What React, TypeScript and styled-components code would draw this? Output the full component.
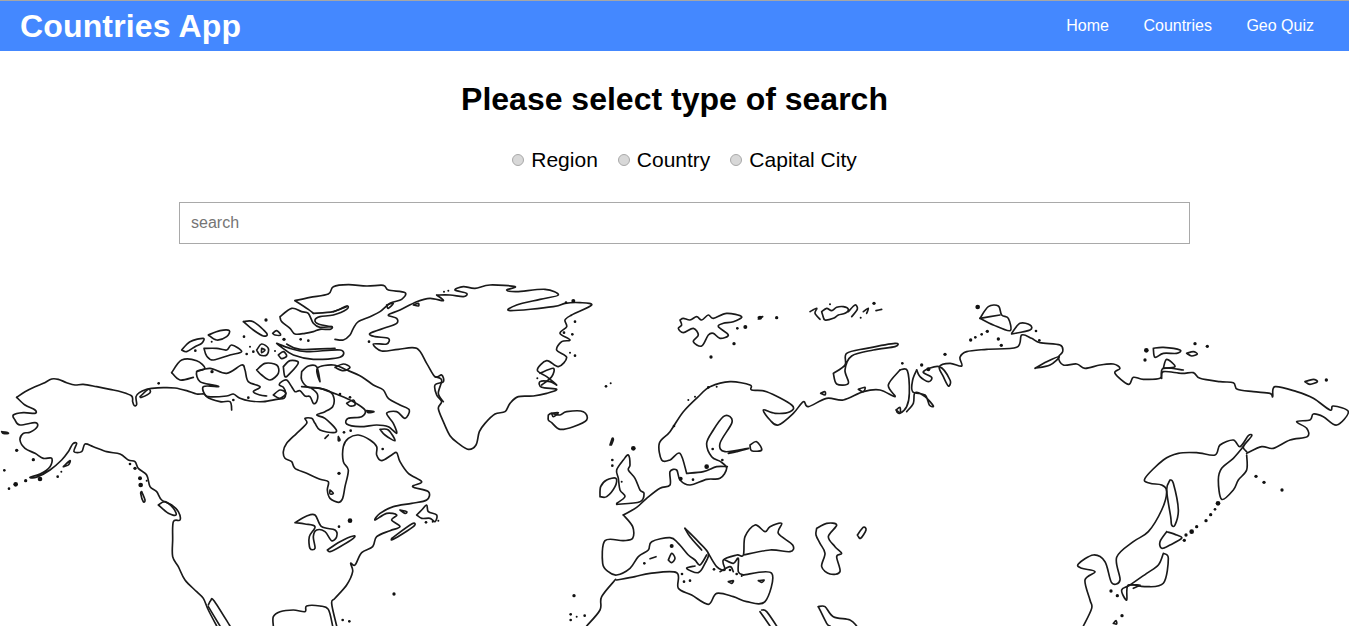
import React from "react";
import styled, { createGlobalStyle } from "styled-components";

const Global = createGlobalStyle`
  html, body { margin: 0; padding: 0; background: #fff; overflow: hidden; }
  body { font-family: "Liberation Sans", Arial, sans-serif; color: #000; }
`;
const Page = styled.div`
  height: 626px;
  overflow: hidden;
`;
const Nav = styled.nav`
  display: flex;
  align-items: center;
  justify-content: space-between;
  height: 50px;
  border-top: 1px solid #a6a6a6;
  background: #4488ff;
  padding: 0 35px 0 20px;
`;
const Brand = styled.div`
  color: #fff;
  font-size: 32px;
  letter-spacing: 0.15px;
  font-weight: 700;
`;
const Links = styled.div`
  display: flex;
  gap: 34.5px;
`;
const NavLink = styled.a`
  color: #fff;
  font-size: 16px;
`;
const Title = styled.h1`
  margin: 30px 0 0;
  text-align: center;
  font-size: 32px;
  line-height: 37px;
  font-weight: 700;
`;
const SearchForm = styled.form`
  display: flex;
  flex-direction: column;
  align-items: center;
  padding-left: 20px;
  margin-top: 30px;
`;
const Radios = styled.div`
  display: flex;
  gap: 20px;
  height: 23px;
  align-items: center;
`;
const RadioLabel = styled.label`
  display: flex;
  align-items: center;
  gap: 7px;
  font-size: 21px;
  line-height: 23px;
`;
const Radio = styled.input`
  appearance: none;
  width: 12px;
  height: 12px;
  margin: 0;
  border: 1px solid #a9a9a9;
  border-radius: 50%;
  background: #d8d8d8;
  box-sizing: border-box;
`;
const SearchInput = styled.input`
  box-sizing: border-box;
  width: 1011px;
  height: 42px;
  margin-top: 31px;
  padding: 0 11px;
  border: 1px solid #a9a9a9;
  border-radius: 0;
  outline: none;
  font: 16px "Liberation Sans", Arial, sans-serif;
  &::placeholder { color: #757575; }
`;
const WorldMap = styled.svg`
  display: block;
  width: 1349px;
  height: 356px;
  margin-top: 26px;
  filter: blur(0.35px);
`;
const Coast = styled.path`
  fill: none;
  stroke: #1a1a1a;
  stroke-width: 5;
  stroke-linejoin: round;
  stroke-linecap: round;
`;
const Isle = styled.circle`
  fill: #111;
`;

function smooth(s: string): string {
  const p = s.trim().split(/\s+/).map((t) => t.split(",").map(Number));
  let d = `M${p[0][0]} ${p[0][1]}`;
  for (let i = 0; i < p.length - 1; i++) {
    const a = p[Math.max(i - 1, 0)], b = p[i], c = p[i + 1], e = p[Math.min(i + 2, p.length - 1)];
    const k = 1 / 6;
    d += `C${(b[0] + (c[0] - a[0]) * k).toFixed(1)} ${(b[1] + (c[1] - a[1]) * k).toFixed(1)} ${(c[0] - (e[0] - b[0]) * k).toFixed(1)} ${(c[1] - (e[1] - b[1]) * k).toFixed(1)} ${c[0]} ${c[1]}`;
  }
  return d;
}

type Sheet = { ox: number; lines: string[]; dots: number[][] };

const west: Sheet = {
  ox: 0,
  lines: [
    "50,382 75,365 105,350 130,340 155,327 175,328 200,338 225,345 250,343 290,350 330,358 365,366 395,378 398,395 403,407 410,403 408,380 418,368 440,358 455,355 490,353 525,354 560,362 590,372 612,372 625,380 680,378 700,372 720,385 750,393 790,395 830,388 852,385 857,370 850,352 838,345 845,335 860,330 875,350 885,365 900,362 915,378 930,380 940,400 950,395 952,372 935,355",
    "905,350 960,355 990,365 1002,385 998,410 975,425 950,435 975,445 1008,478 1000,488 960,480 945,460 935,445 915,445 920,460 890,490 860,520 850,545 855,565 875,575 885,595 920,610 960,628 985,635 982,660 990,685 1015,697 1028,685 1035,650 1045,600 1030,575 1030,530 1045,505 1075,495 1110,510 1130,530 1130,555 1145,572 1175,555 1190,548 1200,575 1225,610 1265,635 1238,650 1285,665 1280,690 1235,700 1180,710 1140,730 1125,750 1160,730 1190,735 1175,750 1200,770 1170,782 1130,800 1118,830 1085,848 1065,885 1052,880 1058,905 1040,945 1005,985 995,1000 1010,1068",
    "50,382 75,405 105,420 105,430 70,428 40,435 45,450 60,465 105,458 112,470 90,487 70,490 60,510 75,535 105,550 130,565 155,565 150,590 120,612 90,622 110,622 150,600 185,570 205,545 218,522 230,520 222,545 245,545 255,522 280,530 320,545 360,552 385,570 405,575 415,595 440,615 450,650 470,665 485,690 515,705 535,725 540,750 520,755 518,810 518,860 535,890 555,930 590,965 610,985 625,1020 650,1068",
    "625,1005 632,992 642,992 690,1068",
    "625,1010 660,1068",
    "820,1068 820,1040 840,1025 880,1020 915,1025 920,1008 960,1008 985,1018 998,1068",
    "885,758 920,738 945,735 965,770 1005,780 1010,800 995,812 975,785 950,780 940,800 945,835 930,835 928,800 945,770 915,762 885,758",
    "982,840 1020,815 1060,798 1060,805 1020,830 990,845 982,840",
    "1200,720 1220,725 1215,730 1200,720",
    "1250,735 1265,720 1280,705 1285,725 1310,735 1305,755 1290,745 1265,745 1250,735",
    "1175,805 1235,762 1240,770 1180,808 1175,805",
    "885,92 930,82 985,72 1000,50 1045,44 1100,48 1150,46 1165,60 1215,68 1205,88 1170,100 1140,125 1110,140 1075,155 1060,175 1050,195 1030,210 1005,208",
    "940,130 1000,125 1040,108 1040,118 1000,135 960,140 945,150 955,162 993,170",
    "885,92 925,118 940,130",
    "840,140 875,115 905,125 925,130 940,160 960,172 995,170 990,178 960,178 940,185 915,190 885,192 870,175 845,155 840,140",
    "830,220 870,235 920,245 1020,240 1020,262 940,268 880,255 845,232 830,220",
    "860,222 900,238 1005,235",
    "905,305 925,288 950,290 960,335 952,295 1000,285 1040,300 1085,320 1120,345 1150,360 1165,385 1200,405 1228,420 1215,445 1190,425 1160,430 1180,460 1190,490 1165,470 1130,465 1080,470 1040,462 1045,445 1085,440 1095,420 1060,395 1015,375 960,355 925,352 905,330 905,305",
    "1140,478 1165,480 1185,512 1155,495 1140,478",
    "1040,400 1060,390 1065,405 1050,408 1040,400",
    "1100,422 1122,425 1105,428 1100,422",
    "515,308 545,270 590,272 615,295 590,305 600,335 640,345 655,350 610,350 620,380 660,395 690,395 695,420",
    "590,305 630,295 680,310 725,285 735,300 745,335 780,350 760,365 780,375 800,378",
    "515,308 540,330 580,322",
    "545,240 570,215 610,205 605,220 585,230 560,245 545,240",
    "612,235 650,235 680,240 695,225 725,245 690,255 640,270 620,258 612,235",
    "625,195 660,182 688,182 680,200 650,210 625,195",
    "730,155 760,155 800,190 790,198 760,180 730,155",
    "818,190 830,182 842,195 825,195 818,190",
    "770,240 785,222 805,235 800,255 780,255 770,240",
    "785,235 795,240 785,248 785,235",
    "835,255 850,245 860,258 845,266 835,255",
    "770,300 795,280 830,285 835,310 810,330 785,315 770,300",
    "850,290 870,272 895,278 870,310 855,320 850,290",
    "1005,292 1030,282 1050,292 1030,302 1005,292",
    "820,375 840,360 858,370 840,385 820,375",
    "5,485 20,487 25,490 10,490 5,485",
    "190,590 210,572 205,585 190,590",
    "425,665 435,690 430,695 422,670 425,665",
    "475,705 495,695 520,715 528,735 505,730 475,705",
    "1160,105 1180,100 1165,115 1160,105",
    "420,380 445,358 450,368 425,382 420,380",
    "1000,125 1040,110",
    "1305,320 1325,330 1315,370 1330,395",
    "1240,105 1255,100 1255,108 1240,105",
    "980,500 985,495 975,505 980,500",
    "1015,500 1020,510 1015,512 1015,500",
    "990,660 1000,670 990,672 990,660",
  ],
  dots: [
    [476, 340, 4], [798, 150, 5], [732, 200, 4], [750, 230, 3], [740, 252, 4], [760, 245, 4], [825, 243, 3], [852, 208, 5], [902, 208, 4], [925, 212, 4], [636, 305, 5], [586, 242, 4], [635, 215, 3], [700, 390, 4], [745, 383, 4],
    [1020, 372, 4], [1050, 382, 4], [1107, 215, 4], [1332, 65, 3], [1345, 62, 3], [1017, 610, 5], [1148, 537, 4], [1050, 752, 7], [1017, 770, 4], [1032, 487, 4], [1052, 482, 4], [1278, 757, 4], [1298, 755, 3], [1315, 752, 3], [1182, 972, 5], [1028, 1050, 4], [1048, 1054, 4],
    [50, 541, 5], [100, 569, 5], [13, 601, 4], [27, 656, 4], [47, 643, 7], [77, 632, 5], [120, 627, 7], [173, 620, 4], [184, 605, 3], [390, 582, 4], [405, 595, 5], [420, 625, 6], [422, 645, 7], [440, 632, 3],
  ],
};

const centre: Sheet = {
  ox: 450,
  lines: [
    "-40,75 -20,92 -60,85 -100,95 -150,120 -185,135 -160,145 -160,160 -190,172 -240,190 -225,200 -185,205 -190,222 -230,222 -205,243 -155,238 -100,235 -70,280 -45,320 -25,315 -20,335 -45,345 -40,375 -25,395 -35,415 -20,455 0,497 25,520 55,538 78,525 88,485 105,460 135,432 165,425 180,400 205,380 250,378 290,370 320,358 275,352 270,335 300,335 320,345 290,320 262,300 290,272 325,290 350,262 320,240 335,215 360,210 330,190 350,170 345,150 365,135 425,105 390,98 345,100 310,110 180,122 200,105 270,88 325,75 285,58 200,65 170,60 195,50 120,45 75,55 40,50 15,60 50,70 40,80 0,75 -40,75",
    "270,310 310,295 305,320 275,345",
    "295,435 305,430 330,435 350,425 400,425 410,450 370,470 330,478 305,458 295,450 295,435",
    "480,525 487,505 490,510 484,525",
    "500,700 525,680 510,660 505,625 500,600 520,570 535,555 540,585 535,600 555,625 570,660 582,670 570,695 500,703",
    "450,680 452,650 470,630 498,625 495,650 470,680 450,680",
    "520,735 560,712 590,685 630,655 660,645 660,605 680,600 690,630 720,645 770,628 810,625 830,595 812,575 785,560 770,520 790,480 820,440 840,440 845,460 810,520 825,545 895,535 860,545 835,550",
    "710,610 690,550 660,570 635,570 628,520 660,485 700,425 750,375 780,350 840,335 900,345 905,360 950,365 1025,405 1020,425 975,430 940,420 960,450 985,465 1030,430 1060,395 1075,410 1130,385 1180,390 1240,365 1290,360 1335,380 1315,345 1350,300",
    "710,610 760,605 800,590 832,590",
    "900,525 920,515 935,540 905,542 900,525",
    "520,735 548,770 548,805 520,812 465,812 458,880 475,905 500,915 540,895 565,860 595,840 605,815 660,803 685,820 715,855 735,870 750,885 770,855",
    "705,775 745,815 775,850 765,880 745,908 710,895 735,888",
    "705,775 720,800 755,840",
    "775,850 800,890 825,900 820,870 860,855 880,855 885,800 915,765 945,785 960,770 995,760 985,790 1028,825 1020,845 960,840 880,855",
    "825,870 850,880 865,865 865,905 880,915",
    "810,905 840,890 850,905",
    "500,930 555,920 600,910 680,908 685,955 725,975 775,1003 800,970 850,980 890,995 945,995 965,910 880,915",
    "497,928 455,980 450,1020 410,1068",
    "655,870 665,850 675,865 665,878 655,870",
    "600,866 618,860",
    "1100,775 1130,760 1160,765 1135,800 1155,830 1175,850 1160,860 1170,905 1140,912 1115,890 1125,850 1110,820 1098,795 1100,775",
    "1222,795 1240,772 1248,780 1232,805 1222,795",
    "935,1020 950,1025 980,1068",
    "930,1025 960,1068",
    "1105,1010 1125,1010 1150,1040 1200,1050 1220,1068",
    "1105,1010 1130,1060 1140,1068",
    "690,150 700,145 720,150 740,140 755,150 775,135 790,145 830,130 875,140 850,155 820,160 805,170 835,195 810,205 790,190 775,195 755,228 730,215 745,195 730,175 700,188 685,175 695,165 690,150",
    "1150,310 1185,285 1190,250 1250,235 1335,220 1335,230 1270,240 1205,258 1185,300 1195,340 1160,342 1150,310",
    "1112,370 1125,365 1125,375 1112,370",
    "1225,358 1245,352 1240,365 1225,358",
    "1080,125 1100,115 1095,130 1110,148",
    "1115,125 1130,115 1145,122 1160,112 1180,110 1195,118 1185,130 1165,135 1150,145 1125,150 1118,135 1115,125",
    "1195,125 1215,105 1222,118 1205,140",
    "1240,125 1255,115 1250,130",
    "1278,122 1295,118",
    "925,142 938,140 925,147",
    "835,935 850,932 845,940 835,935",
    "925,932 942,930 935,937 925,932",
    "1338,420 1350,412 1350,428 1338,420",
    "305,430 325,428 310,440 305,430",
  ],
  dots: [
    [370, 93, 6], [348, 98, 4], [375, 155, 4], [342, 188, 4], [367, 193, 4], [360, 248, 3], [375, 257, 4], [262, 325, 3], [482, 340, 3], [468, 349, 4],
    [930, 143, 6], [980, 143, 5], [862, 175, 4], [886, 171, 6], [852, 221, 5], [783, 261, 5], [1272, 100, 5], [1140, 103, 3], [1232, 143, 3],
    [775, 352, 4], [800, 350, 3], [735, 380, 3], [715, 390, 3], [672, 468, 4], [550, 535, 7], [487, 570, 4], [487, 587, 4], [515, 635, 3], [692, 626, 6], [729, 629, 4], [770, 590, 7], [788, 537, 4], [817, 570, 4],
    [665, 828, 6], [583, 880, 4], [696, 912, 4], [702, 935, 4], [720, 932, 4], [792, 898, 4], [840, 900, 4], [860, 912, 4], [875, 918, 3], [372, 977, 5], [362, 1033, 4], [362, 1050, 4], [380, 1040, 3], [404, 1037, 4],
  ],
};

const east: Sheet = {
  ox: 900,
  lines: [
    "0,300 22,302 28,370 20,410 0,430 -10,425",
    "50,300 38,330 38,365 75,375 88,405 100,408 75,380 45,368 40,400 20,425",
    "50,300 60,320 85,335 95,322 70,305 118,290 150,330 145,348 130,320 118,290 150,280 185,288 180,262 200,245 260,238 350,232 365,195 395,205 420,218 480,225 488,245 475,262 490,285 530,282 555,295 600,285 640,282 660,295 645,310 685,343 700,322 730,328 780,325 790,305 845,310 880,308 900,325 960,335 1000,338 1012,358 1060,365 1110,370 1118,380 1125,350 1190,365 1240,385 1290,420 1300,408 1345,425 1310,465 1270,440 1240,432 1230,450 1190,455 1220,475 1222,500 1170,510 1120,535 1085,530 1040,550",
    "1040,545 1030,530 1055,498 1045,497 1020,530 1000,510 960,525 945,555 890,548 835,550 790,570 735,625 750,640 785,645 800,665 785,720 745,785 700,815 650,862 660,930 635,938 615,875 580,855 535,882 545,895 585,905 555,930 570,990 575,1015 550,1068",
    "1040,555 1040,600 1015,630 1000,660 965,688 955,630 965,595 1000,565 1030,530",
    "800,785 830,795 845,805 810,825 785,835 780,815 800,785",
    "810,630 820,640 835,720 825,765 815,765 812,740 800,660 810,630",
    "790,850 805,865 790,940 735,950 685,945 680,990 665,960 690,945 740,910 775,885 790,850",
    "690,945 720,945 700,955",
    "240,145 265,110 295,108 305,135 325,145 330,182 280,165 240,145",
    "240,145 300,135",
    "335,190 360,160 390,165 390,180 335,192",
    "405,295 440,275 478,260 450,285 405,295",
    "760,235 790,232 840,240 830,250 790,250 765,262 760,235",
    "860,250 880,245 892,252 875,258 860,250",
    "790,295 800,268 825,290 790,295",
    "785,325 790,295 850,300",
    "1215,335 1240,328 1252,335 1230,343 1215,335",
    "640,1060 648,1052 650,1062 640,1060",
  ],
  dots: [
    [233, 111, 7], [7, 280, 4], [65, 285, 5], [85, 298, 6], [135, 253, 5], [212, 210, 5], [226, 202, 4], [245, 193, 4], [262, 184, 5], [295, 207, 5], [304, 226, 5], [408, 183, 4], [418, 211, 4], [739, 241, 7], [735, 270, 5], [885, 221, 5], [922, 229, 5], [1279, 330, 5],
    [1068, 619, 5], [1092, 637, 5], [1146, 660, 5], [954, 700, 7], [945, 718, 4], [932, 734, 5], [918, 752, 5], [890, 770, 5], [875, 785, 7], [858, 795, 5], [853, 811, 5], [633, 963, 5], [652, 977, 5], [666, 1037, 5],
  ],
};

const sheets = [west, centre, east];
const links = ["Home", "Countries", "Geo Quiz"];
const kinds = ["Region", "Country", "Capital City"];

export default function App() {
  return (
    <Page>
      <Global />
      <Nav>
        <Brand>Countries App</Brand>
        <Links>
          {links.map((l) => (
            <NavLink key={l}>{l}</NavLink>
          ))}
        </Links>
      </Nav>
      <Title>Please select type of search</Title>
      <SearchForm>
        <Radios>
          {kinds.map((k) => (
            <RadioLabel key={k}>
              <Radio type="radio" name="kind" />
              {k}
            </RadioLabel>
          ))}
        </Radios>
        <SearchInput placeholder="search" />
      </SearchForm>
      <WorldMap viewBox="0 0 1349 356">
        {sheets.map((s) => (
          <g key={s.ox} transform={`translate(${s.ox} 0) scale(${1 / 3})`}>
            {s.lines.map((l, i) => (
              <Coast key={i} d={smooth(l)} />
            ))}
            {s.dots.map((d, i) => (
              <Isle key={i} cx={d[0]} cy={d[1]} r={d[2]} />
            ))}
          </g>
        ))}
      </WorldMap>
    </Page>
  );
}
